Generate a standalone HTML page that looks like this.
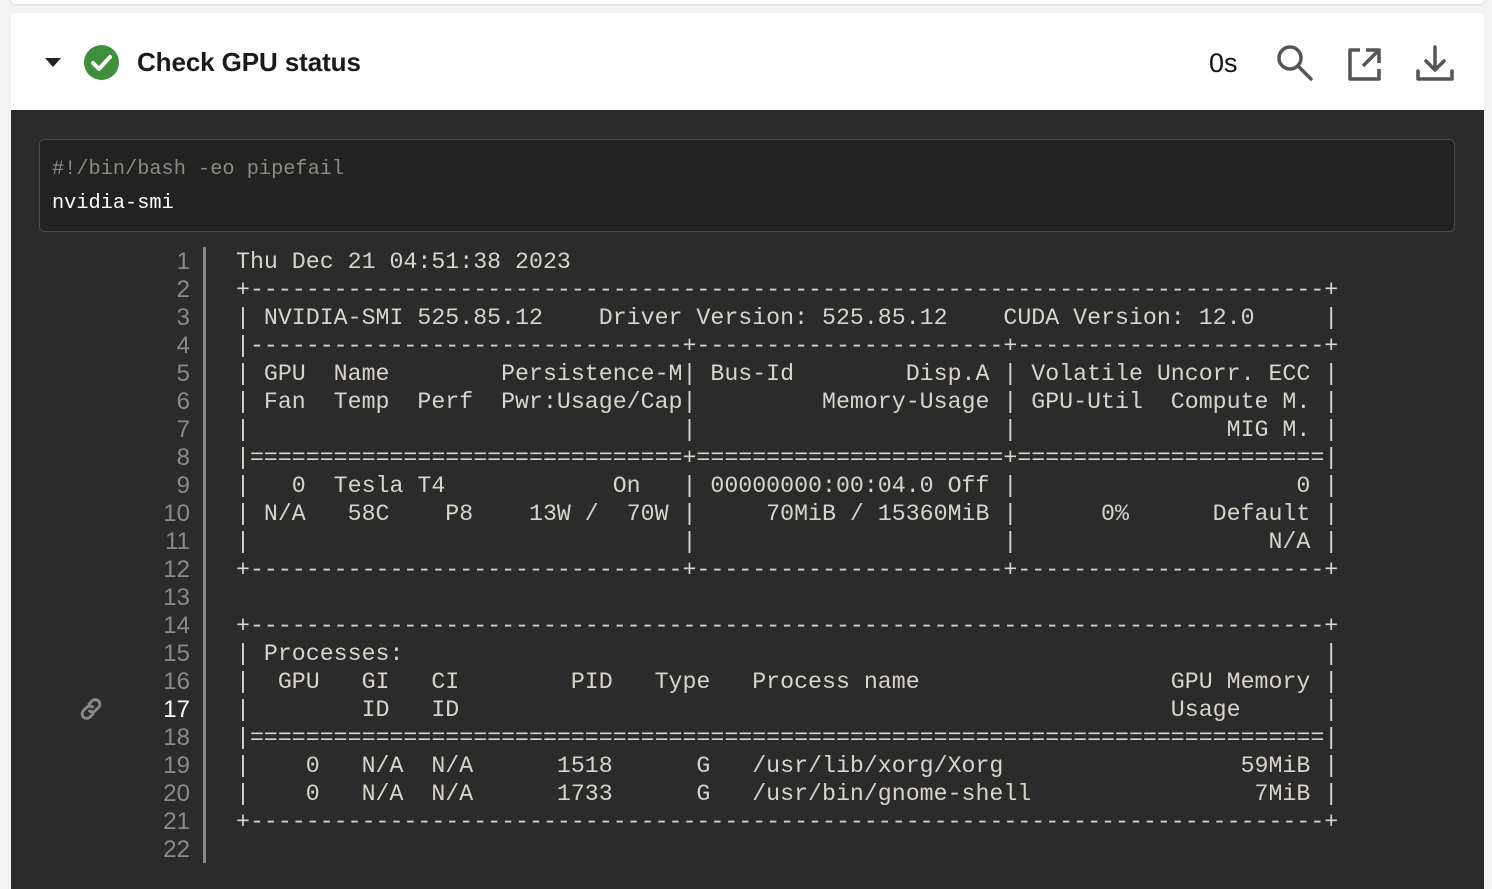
<!DOCTYPE html>
<html><head><meta charset="utf-8"><style>
*{margin:0;padding:0;box-sizing:border-box}
body{width:1492px;height:889px;background:#f3f3f3;overflow:hidden;position:relative;font-family:"Liberation Sans",sans-serif}
.top{position:absolute;left:11px;top:-10px;width:1473px;height:14px;background:#fff;border-radius:4px;box-shadow:0 1px 2px rgba(0,0,0,.12)}
.hdr{position:absolute;left:11px;top:13px;width:1473px;height:98px;background:#fff;border-radius:4px 4px 0 0}
.title{position:absolute;left:126px;top:34px;font-size:26px;font-weight:bold;color:#1a1a1a;letter-spacing:-0.1px}
.time{position:absolute;left:1198px;top:35px;font-size:27px;color:#111}
.dark{position:absolute;left:11px;top:110px;width:1473px;height:779px;background:#2b2b2b}
.script{position:absolute;left:39px;top:139px;width:1416px;height:93px;background:#222;border:1px solid #4a4a4a;border-radius:5px;font-family:"Liberation Mono",monospace;font-size:20.3px;line-height:34px;padding:13px 0 0 12px;color:#fff}
.script .c{color:#8d8a80}
.nums{position:absolute;left:120px;top:248px;width:70px;text-align:right;font-family:"Liberation Sans",sans-serif;font-size:24px;line-height:28px;color:#8a8a8a}
.nums b{color:#fff;font-weight:normal}
.sep{position:absolute;left:203px;top:247px;width:3px;height:616px;background:#8a8a8a}
pre{position:absolute;left:236px;top:248px;font-family:"Liberation Mono",monospace;font-size:23.25px;line-height:28px;color:#d8d4ca;white-space:pre}
</style></head><body>
<div class="top"></div>
<div class="hdr">
<svg style="position:absolute;left:33px;top:44px" width="18" height="12"><path d="M1 1h16L9 10z" fill="#222"/></svg>
<svg style="position:absolute;left:72px;top:31px" width="37" height="37"><circle cx="18.5" cy="18.5" r="17.5" fill="#3f8f3b"/><path d="M10 19l6 6 11-12" stroke="#fff" stroke-width="4" fill="none" stroke-linecap="round" stroke-linejoin="round"/></svg>
<div class="title">Check GPU status</div>
<div class="time">0s</div>
<svg style="position:absolute;left:1264px;top:30px" width="40" height="40" fill="none" stroke="#555" stroke-width="3.5" stroke-linecap="round"><circle cx="15" cy="15" r="11"/><path d="M23 23l13 13"/></svg>
<svg style="position:absolute;left:1336px;top:33px" width="36" height="36" fill="none" stroke="#555" stroke-width="3.5" stroke-linejoin="round"><path d="M13 4H3v29h29V23"/><path d="M19 4h13v13M32 4L16 20"/></svg>
<svg style="position:absolute;left:1404px;top:31px" width="40" height="40" fill="none" stroke="#555" stroke-width="3.5" stroke-linecap="round" stroke-linejoin="round"><path d="M20 3v22M11 17l9 9 9-9"/><path d="M3 27v8h34v-8"/></svg>
</div>
<div class="dark"></div>
<div class="script"><span class="c">#!/bin/bash -eo pipefail</span><br>nvidia-smi</div>
<svg style="position:absolute;left:78px;top:696px" width="26" height="26" fill="none" stroke="#888" stroke-width="3" stroke-linecap="round"><path d="M11 8l3-3a4.5 4.5 0 016.5 6.5l-3 3a4.5 4.5 0 01-6 .5"/><path d="M15 18l-3 3a4.5 4.5 0 01-6.5-6.5l3-3a4.5 4.5 0 016-.5"/></svg>
<div class="nums">1<br>2<br>3<br>4<br>5<br>6<br>7<br>8<br>9<br>10<br>11<br>12<br>13<br>14<br>15<br>16<br><b>17</b><br>18<br>19<br>20<br>21<br>22</div>
<div class="sep"></div>
<pre>Thu Dec 21 04:51:38 2023       
+-----------------------------------------------------------------------------+
| NVIDIA-SMI 525.85.12    Driver Version: 525.85.12    CUDA Version: 12.0     |
|-------------------------------+----------------------+----------------------+
| GPU  Name        Persistence-M| Bus-Id        Disp.A | Volatile Uncorr. ECC |
| Fan  Temp  Perf  Pwr:Usage/Cap|         Memory-Usage | GPU-Util  Compute M. |
|                               |                      |               MIG M. |
|===============================+======================+======================|
|   0  Tesla T4            On   | 00000000:00:04.0 Off |                    0 |
| N/A   58C    P8    13W /  70W |     70MiB / 15360MiB |      0%      Default |
|                               |                      |                  N/A |
+-------------------------------+----------------------+----------------------+
                                                                               
+-----------------------------------------------------------------------------+
| Processes:                                                                  |
|  GPU   GI   CI        PID   Type   Process name                  GPU Memory |
|        ID   ID                                                   Usage      |
|=============================================================================|
|    0   N/A  N/A      1518      G   /usr/lib/xorg/Xorg                 59MiB |
|    0   N/A  N/A      1733      G   /usr/bin/gnome-shell                7MiB |
+-----------------------------------------------------------------------------+
</pre>
</body></html>
